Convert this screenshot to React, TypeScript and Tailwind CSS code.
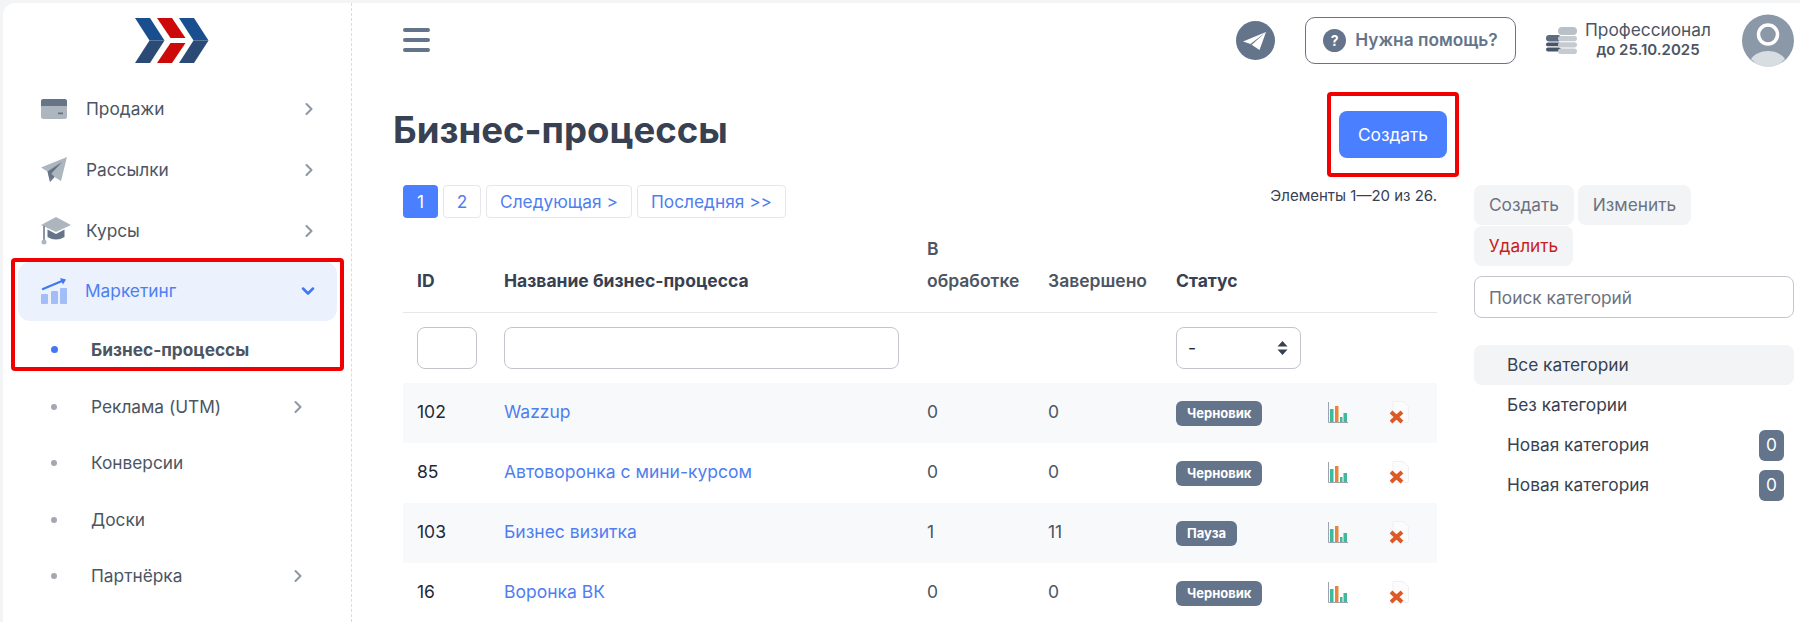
import { ChevronDown, ChevronRight } from "lucide-react";

function Logo() {
  return (
    <svg width="76" height="46" viewBox="0 0 76 46" className="block">
      <path d="M1 0h15l14.500 22.500H15.500z" fill="#1a4f8f" />
      <path d="M1 45h15l14.500-22.500H15.500z" fill="#2b4a75" />
      <path d="M23 0h15l13.500 20H36.500z" fill="#cc0a0a" />
      <path d="M23 45h15l13.500-20H36.500z" fill="#cc0a0a" />
      <path d="M45 0h15l14.500 22.500H59.500z" fill="#1a4f8f" />
      <path d="M45 45h15l14.500-22.500H59.500z" fill="#2b4a75" />
    </svg>
  );
}

function CardIcon() {
  return (
    <svg width="26" height="20" viewBox="0 0 26 20">
      <rect width="26" height="20" rx="2.500" fill="#adb5bf" />
      <path d="M0 7V2.500A2.500 2.500 0 0 1 2.500 0h21A2.500 2.500 0 0 1 26 2.500V7z" fill="#667487" />
      <rect x="17" y="13.500" width="5" height="1.800" fill="#667487" />
    </svg>
  );
}

function PlaneIcon() {
  return (
    <svg width="26" height="26" viewBox="0 0 26 26">
      <path d="M26 0 0 10.500l6.500 4L9 25l4.500-5 6.500 4z" fill="#adb5bf" />
      <path d="M6.500 14.500 21 5 10.500 16.500 9 25z" fill="#667487" />
      <path d="M10.500 16.500 9 25l4.500-5z" fill="#667487" />
    </svg>
  );
}

function CapIcon() {
  return (
    <svg width="30" height="28" viewBox="0 0 30 28">
      <path d="M15 0 30 8l-15 7L0 8z" fill="#adb5bf" />
      <path d="M6.500 12.500 15 17l8.500-4.500V20q-8.500 5-17 0z" fill="#667487" />
      <path d="M3 9v15" stroke="#667487" strokeWidth="1.500" />
      <circle cx="3" cy="25" r="2.500" fill="#adb5bf" />
    </svg>
  );
}

function ChartUpIcon() {
  return (
    <svg width="26" height="26" viewBox="0 0 26 26">
      <rect x="0" y="16" width="7" height="10" rx="1" fill="#a3bdf8" />
      <rect x="10" y="13" width="7" height="13" rx="1" fill="#a3bdf8" />
      <rect x="19" y="10" width="7" height="16" rx="1" fill="#a3bdf8" />
      <path d="M2 11 21 3" stroke="#3f78f2" strokeWidth="2.200" strokeLinecap="round" />
      <path d="M19 0l6 1.500-3 5z" fill="#3f78f2" />
    </svg>
  );
}

function TelegramIcon() {
  return (
    <svg width="39" height="39" viewBox="0 0 39 39">
      <circle cx="19.500" cy="19.500" r="19.500" fill="#64748b" />
      <path d="M30 11 7 20.500l7.500 2.500 9 6z" fill="#fff" />
      <path d="M30 11 14.500 23l1 1z" fill="#64748b" />
    </svg>
  );
}

function CoinsIcon() {
  return (
    <svg width="31" height="27" viewBox="0 0 31 27">
      <rect x="0" y="8" width="15" height="6.500" rx="3.200" fill="#5d6b80" />
      <rect x="0" y="15.500" width="15" height="3.800" rx="1.900" fill="#475569" />
      <rect x="0" y="20.500" width="15" height="4" rx="2" fill="#475569" />
      <rect x="12" y="0" width="19" height="8" rx="4" fill="#b9c0c8" />
      <rect x="12" y="9" width="19" height="5.200" rx="2.600" fill="#c6cbd2" />
      <rect x="12" y="15.200" width="19" height="5.200" rx="2.600" fill="#c6cbd2" />
      <rect x="12" y="21.400" width="19" height="5.600" rx="2.800" fill="#c6cbd2" />
    </svg>
  );
}

function AvatarIcon() {
  return (
    <svg width="52" height="53" viewBox="0 0 52 53">
      <circle cx="26" cy="26.500" r="26" fill="#8a98a8" />
      <circle cx="26" cy="20.500" r="9.500" fill="#8a98a8" stroke="#fff" strokeWidth="3.500" />
      <path d="M9 45c3-5 10-8 17-8s14 3 17 8q-7 8-17 8T9 45z" fill="#d8dde2" />
    </svg>
  );
}

function BarsIcon() {
  return (
    <svg width="20" height="21" viewBox="0 0 20 21">
      <path d="M.5 0v20.500H20" fill="none" stroke="#9ca3af" strokeWidth="1" />
      <rect x="2" y="7" width="3.500" height="13" fill="#3fb89b" />
      <rect x="7" y="4" width="3.500" height="16" fill="#e8873c" />
      <rect x="12" y="15" width="2.500" height="5" fill="#3fb89b" />
      <rect x="15.500" y="11" width="3.500" height="9" fill="#3fb89b" />
    </svg>
  );
}

function DeleteIcon() {
  return (
    <svg width="19" height="23" viewBox="0 0 19 23">
      <path d="M3 .5h10l5.500 5V20a1.500 1.500 0 0 1-1.500 1.500H4.500A1.500 1.500 0 0 1 3 20z" fill="#fcfcfd" stroke="#eff0f3" />
      <path d="M1 11l11 10M12 11 1 21" stroke="#dd5a26" strokeWidth="4" />
    </svg>
  );
}

function NavItem({ icon, label }: { icon: React.ReactNode; label: string }) {
  return (
    <div className="flex h-[61px] items-center pl-[38px] pr-[32px] text-[#4b5563]">
      <span className="flex w-[45px] shrink-0">{icon}</span>
      <span className="flex-1">{label}</span>
      <ChevronRight className="h-5 w-5 text-[#8f99a6]" strokeWidth={2.500} />
    </div>
  );
}

function SubItem({ label, arrow }: { label: string; arrow?: boolean }) {
  return (
    <div className="flex h-[56.5px] items-center pl-[48px] text-[#4b5563]">
      <span className="mr-[34px] h-[6px] w-[6px] rounded-full bg-[#a3a8b0]" />
      <span className="w-[197px]">{label}</span>
      {arrow && <ChevronRight className="h-5 w-5 text-[#8f99a6]" strokeWidth={2.500} />}
    </div>
  );
}

const ROWS = [
  { id: "102", name: "Wazzup", work: "0", done: "0", status: "Черновик" },
  { id: "85", name: "Автоворонка с мини-курсом", work: "0", done: "0", status: "Черновик" },
  { id: "103", name: "Бизнес визитка", work: "1", done: "11", status: "Пауза" },
  { id: "16", name: "Воронка ВК", work: "0", done: "0", status: "Черновик" },
];

const CATEGORIES = [
  { name: "Все категории", active: true },
  { name: "Без категории" },
  { name: "Новая категория", count: "0" },
  { name: "Новая категория", count: "0" },
];

export default function App() {
  return (
    <div className="h-[622px] w-[1800px] overflow-hidden bg-[#f3f4f5] pl-[3px] pt-[3px] font-[Inter,sans-serif] text-[17.3px] text-[#1f2937]">
      <div className="flex h-full rounded-tl-xl bg-white">
        <aside className="w-[349px] shrink-0 border-r border-dashed border-[#d8dbe0]">
          <div className="flex h-[75.5px] justify-center pr-[10px] pt-[15px]">
            <Logo />
          </div>
          <NavItem icon={<CardIcon />} label="Продажи" />
          <NavItem icon={<PlaneIcon />} label="Рассылки" />
          <NavItem icon={<CapIcon />} label="Курсы" />

          <div className="-mt-[4px] ml-2 w-[333px] rounded-sm border-4 border-[#f00000] px-[3px]">
            <div className="flex h-[59px] items-center rounded-xl bg-[#ebf1fd] pl-[23px] pr-[19px] text-[#4f7ef0]">
              <span className="flex w-[44px] shrink-0"><ChartUpIcon /></span>
              <span className="flex-1">Маркетинг</span>
              <ChevronDown className="h-5 w-5 text-[#3f78f2]" strokeWidth={3} />
            </div>
            <div className="flex h-[46px] items-center pl-[33px] pt-[12px] font-bold text-[#4b5563]">
              <span className="mr-[33px] h-[7px] w-[7px] rounded-full bg-[#3f78f2]" />
              Бизнес-процессы
            </div>
          </div>

          <div className="mt-2">
            <SubItem label="Реклама (UTM)" arrow />
            <SubItem label="Конверсии" />
            <SubItem label="Доски" />
            <SubItem label="Партнёрка" arrow />
          </div>
        </aside>

        <main className="min-w-0 flex-1">
          <header className="flex h-[74px] items-center justify-between pl-[51px] pr-[6px]">
            <svg width="27" height="24" viewBox="0 0 27 24">
              <rect width="27" height="4" y="0" rx="2" fill="#64748b" />
              <rect width="27" height="4" y="10" rx="2" fill="#64748b" />
              <rect width="27" height="4" y="20" rx="2" fill="#64748b" />
            </svg>
            <div className="flex items-center">
              <TelegramIcon />
              <div className="ml-[30px] flex h-[47px] w-[211px] items-center justify-center gap-[9px] rounded-[10px] border border-[#6b7280] font-semibold text-[#64748b]">
                <span className="flex h-[23px] w-[23px] items-center justify-center rounded-full bg-[#64748b] text-[14px] font-bold text-white">?</span>
                Нужна помощь?
              </div>
              <div className="ml-[30px]"><CoinsIcon /></div>
              <div className="ml-[8px] w-[126px] text-center leading-[20px] text-[#4b5563]">
                <div>Профессионал</div>
                <div className="text-[15px] font-semibold">до 25.10.2025</div>
              </div>
              <div className="ml-[31px]"><AvatarIcon /></div>
            </div>
          </header>

          <div className="flex w-[1107px] items-start justify-between pl-[41px] pt-[15px]">
            <h1 className="pt-[16px] text-[36.600px] font-bold leading-[44px] text-[#374151]">Бизнес-процессы</h1>
            <div className="rounded-sm border-4 border-[#f00000] px-2 py-[15px]">
              <button className="h-[47px] w-[108px] rounded-lg bg-[#4a80ff] text-white">Создать</button>
            </div>
          </div>

          <div className="mt-2 flex pl-[51px]">
            <section className="w-[1034px] shrink-0">
              <div className="flex items-start justify-between">
                <div className="flex gap-[5px] text-[#4f7ef0]">
                  <span className="flex h-[33px] w-[35px] items-center justify-center rounded bg-[#4a80ff] text-white">1</span>
                  <span className="flex h-[33px] w-[38px] items-center justify-center rounded border border-[#e5e7eb]">2</span>
                  <span className="flex h-[33px] w-[146px] items-center justify-center rounded border border-[#e5e7eb]">Следующая &gt;</span>
                  <span className="flex h-[33px] w-[149px] items-center justify-center rounded border border-[#e5e7eb]">Последняя &gt;&gt;</span>
                </div>
                <span className="pt-[2px] text-[15px] leading-[18px] text-[#374151]">Элементы 1—20 из 26.</span>
              </div>

              <table className="mt-[15px] w-full table-fixed border-collapse text-left text-[17.500px]">
                <colgroup>
                  <col className="w-[87px]" />
                  <col className="w-[423px]" />
                  <col className="w-[121px]" />
                  <col className="w-[128px]" />
                  <col className="w-[152px]" />
                  <col className="w-[62px]" />
                  <col className="w-[61px]" />
                </colgroup>
                <thead>
                  <tr className="border-b border-[#e5e7eb] align-bottom leading-8 text-[#374151]">
                    <th className="pb-[15px] pl-[14px] font-bold">ID</th>
                    <th className="pb-[15px] pl-[14px] font-bold">Название бизнес-процесса</th>
                    <th className="pb-[15px] pl-[14px] font-semibold text-[#4b5563]">В<br />обработке</th>
                    <th className="pb-[15px] pl-[14px] font-semibold text-[#4b5563]">Завершено</th>
                    <th className="pb-[15px] pl-[14px] font-bold">Статус</th>
                    <th />
                    <th />
                  </tr>
                  <tr className="h-[70px]">
                    <th className="pl-[14px]"><input className="block h-[42px] w-[60px] rounded-lg border border-[#c2c6cc] bg-white" /></th>
                    <th className="pl-[14px]"><input className="block h-[42px] w-[395px] rounded-lg border border-[#c2c6cc] bg-white" /></th>
                    <th />
                    <th />
                    <th className="pl-[14px]">
                      <div className="flex h-[42px] w-[125px] items-center justify-between rounded-lg border border-[#c2c6cc] pl-[11px] pr-[12px] font-normal">
                        -
                        <svg width="11" height="14" viewBox="0 0 11 14">
                          <path d="M5.500 0 10.500 5.500H.5zM5.500 14 .5 8.500h10z" fill="#374151" />
                        </svg>
                      </div>
                    </th>
                    <th />
                    <th />
                  </tr>
                </thead>
                <tbody>
                  {ROWS.map((row, i) => (
                    <tr key={row.id} className={i % 2 === 0 ? "h-[60px] bg-[#f8f9fb]" : "h-[60px]"}>
                      <td className="pl-[14px]">{row.id}</td>
                      <td className="pl-[14px] text-[#4f7ef0]">{row.name}</td>
                      <td className="pl-[14px] text-[#4b5563]">{row.work}</td>
                      <td className="pl-[14px] text-[#4b5563]">{row.done}</td>
                      <td className="pl-[14px]">
                        <span className="inline-flex h-[25px] items-center rounded-md bg-[#64748b] px-[11px] text-[13px] font-bold text-white">{row.status}</span>
                      </td>
                      <td className="pl-[14px]"><BarsIcon /></td>
                      <td className="pl-[14px]"><DeleteIcon /></td>
                    </tr>
                  ))}
                </tbody>
              </table>
            </section>

            <aside className="ml-[37px] w-[320px] shrink-0">
              <div className="flex gap-1 text-[#6b7280]">
                <span className="flex h-10 w-[100px] items-center justify-center rounded-lg bg-[#f3f4f6]">Создать</span>
                <span className="flex h-10 w-[113px] items-center justify-center rounded-lg bg-[#f3f4f6]">Изменить</span>
              </div>
              <span className="mt-px flex h-10 w-[99px] items-center justify-center rounded-lg bg-[#f3f4f6] text-[#c81e1e]">Удалить</span>
              <input
                className="mt-[10px] block h-[42px] w-full rounded-lg border border-[#c2c6cc] px-[14px] placeholder:text-[#6b7280]"
                placeholder="Поиск категорий"
              />
              <div className="mt-[27px] text-[#374151]">
                {CATEGORIES.map((cat, i) => (
                  <div
                    key={i}
                    className={
                      cat.active
                        ? "flex h-10 items-center rounded-lg bg-[#f3f4f6] pl-[33px] pr-[10px]"
                        : "flex h-10 items-center pl-[33px] pr-[10px]"
                    }
                  >
                    <span className="flex-1">{cat.name}</span>
                    {cat.count && (
                      <span className="flex h-[31px] w-[25px] items-center justify-center rounded-md bg-[#64748b] text-white">{cat.count}</span>
                    )}
                  </div>
                ))}
              </div>
            </aside>
          </div>
        </main>
      </div>
    </div>
  );
}
